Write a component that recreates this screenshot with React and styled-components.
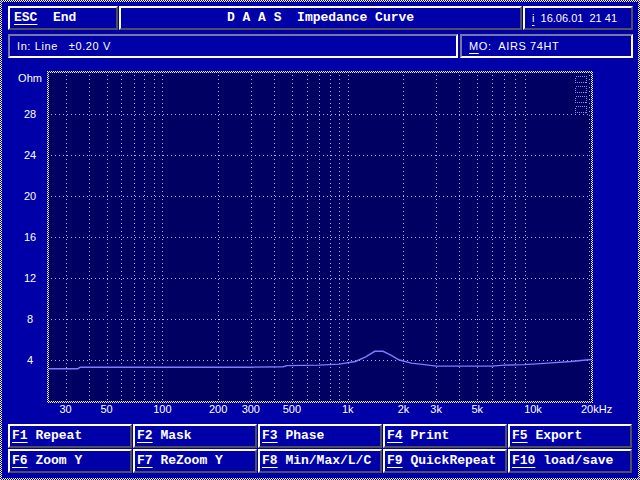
import React from "react";
import styled, { createGlobalStyle, css } from "styled-components";

const Global = createGlobalStyle`
  html, body { margin: 0; padding: 0; background: #0000a8; }
  body { font-family: "Liberation Sans", Arial, sans-serif; }
`;

const BLUE = "#0000a8";
const NAVY = "#000062";
const DOT = "#a8a8f8";

const Screen = styled.div`
  width: 640px;
  height: 480px;
  box-sizing: border-box;
  padding: 2px;
  background: repeating-conic-gradient(#ffffff 0 25%, ${BLUE} 0 50%) 0 0 / 2px 2px;
`;

const Inner = styled.div`
  height: 100%;
  box-sizing: border-box;
  background: ${BLUE};
  padding: 4px 5px 5px 6px;
  display: flex;
  flex-direction: column;
  gap: 4px;
  color: #ffffff;
`;

const TopRow = styled.div`
  display: grid;
  grid-template-columns: 110px 1fr 110px;
  column-gap: 1px;
  height: 24px;
`;

const InfoRow = styled.div`
  display: grid;
  grid-template-columns: 450px 1fr;
  column-gap: 2px;
  height: 24px;
`;

const Panel = styled.div`
  box-sizing: border-box;
  display: block;
  line-height: 20px;
  white-space: pre;
  overflow: hidden;
  background: ${BLUE};
  text-align: ${(p) => (p.$center ? "center" : "left")};
  padding-left: ${(p) => (p.$center ? 0 : p.$pad ?? 4)}px;
  ${(p) =>
    p.$sunken
      ? css`
          border-top: 2px solid #7878a0;
          border-left: 2px solid #7878a0;
          border-bottom: 2px solid #ffffff;
          border-right: 2px solid #ffffff;
          font-family: "Liberation Sans", Arial, sans-serif;
          font-size: 11px;
          letter-spacing: 0.6px;
        `
      : css`
          border-top: 2px solid #ffffff;
          border-left: 2px solid #ffffff;
          border-bottom: 2px solid #50505c;
          border-right: 2px solid #50505c;
          font-family: "Liberation Mono", "DejaVu Sans Mono", monospace;
          font-weight: bold;
          font-size: 13px;
        `}
  ${(p) =>
    p.$light &&
    css`
      font-family: "Liberation Sans", Arial, sans-serif;
      font-weight: normal;
      font-size: 11px;
    `}
`;

const Key = styled.span`
  text-decoration: underline;
  text-underline-offset: 3px;
  text-decoration-thickness: 1px;
`;

const ChartBox = styled.div`
  height: 358px;
`;

const FKeys = styled.div`
  display: grid;
  grid-template-columns: repeat(5, 124px);
  grid-template-rows: 24px 24px;
  gap: 1px;
`;

const xOf = (f) => 162.4 + 185.3 * (Math.log10(f) - 2);
const yOf = (ohm) => 401 - ohm * 10.25;

const PLOT = { x: 49, y: 73, w: 542, h: 328 };

const curve = [
  [24.4, 3.15], [35, 3.15], [36, 3.3], [300, 3.3], [450, 3.35], [470, 3.45],
  [700, 3.5], [900, 3.6], [1100, 3.85], [1250, 4.3], [1400, 4.85], [1550, 4.85],
  [1700, 4.5], [1900, 4.0], [2200, 3.7], [2600, 3.55], [3000, 3.4], [6000, 3.4],
  [7000, 3.5], [9000, 3.55], [12000, 3.7], [16000, 3.85], [20600, 4.05],
];

const vGrid = [];
[10, 100, 1000].forEach((d) => {
  for (let m = 1; m <= 9; m++) {
    const f = d * m;
    if (f >= 30 && f <= 10000) vGrid.push(f);
  }
});
vGrid.push(20000);

const xLabels = [
  [30, "30"], [50, "50"], [100, "100"], [200, "200"], [300, "300"], [500, "500"],
  [1000, "1k"], [2000, "2k"], [3000, "3k"], [5000, "5k"], [10000, "10k"],
];

const Chart = () => (
  <svg width="624" height="358" viewBox="8 62 624 358" style={{ display: "block" }}>
    <defs>
      <pattern id="chk" width="2" height="2" patternUnits="userSpaceOnUse">
        <rect width="2" height="2" fill={BLUE} />
        <rect width="1" height="1" fill="#ffffff" />
        <rect x="1" y="1" width="1" height="1" fill="#ffffff" />
      </pattern>
    </defs>
    <rect x={PLOT.x - 2} y={PLOT.y - 2} width={PLOT.w + 4} height={PLOT.h + 4} fill="url(#chk)" />
    <rect x={PLOT.x} y={PLOT.y} width={PLOT.w} height={PLOT.h} fill={NAVY} />
    <g stroke={DOT} strokeWidth="1" strokeDasharray="1 3" shapeRendering="crispEdges">
      {vGrid.map((f) => {
        const x = Math.round(xOf(f)) + 0.5;
        return <line key={f} x1={x} y1={PLOT.y + 2} x2={x} y2={PLOT.y + PLOT.h} />;
      })}
      {[4, 8, 12, 16, 20, 24, 28].map((o) => {
        const y = Math.round(yOf(o)) + 0.5;
        return <line key={o} x1={PLOT.x + 2} y1={y} x2={PLOT.x + PLOT.w} y2={y} />;
      })}
    </g>
    <g fill="none" stroke="#8c8ce8" strokeWidth="1" strokeDasharray="1 1" shapeRendering="crispEdges">
      <rect x="575.5" y="76.5" width="11" height="6" />
      <rect x="575.5" y="86.5" width="11" height="6" />
      <rect x="575.5" y="96.5" width="11" height="6" />
      <rect x="575.5" y="106.5" width="11" height="6" />
    </g>
    <polyline
      points={curve.map(([f, o]) => `${xOf(f).toFixed(1)},${yOf(o).toFixed(1)}`).join(" ")}
      fill="none"
      stroke="#7c7cff"
      strokeWidth="1.4"
    />
    <g fill="#ffffff" fontFamily="Liberation Sans, Arial, sans-serif" fontSize="11" textAnchor="middle">
      <text x="30" y="82">Ohm</text>
      {[4, 8, 12, 16, 20, 24, 28].map((o) => (
        <text key={o} x="30" y={Math.round(yOf(o)) + 4}>{o}</text>
      ))}
      {xLabels.map(([f, t]) => (
        <text key={f} x={xOf(f)} y="413">{t}</text>
      ))}
      <text x="581" y="413" textAnchor="start">20kHz</text>
    </g>
  </svg>
);

const fkeys = [
  ["F1", "Repeat"], ["F2", "Mask"], ["F3", "Phase"], ["F4", "Print"], ["F5", "Export"],
  ["F6", "Zoom Y"], ["F7", "ReZoom Y"], ["F8", "Min/Max/L/C"], ["F9", "QuickRepeat"], ["F10", "load/save"],
];

export default function App() {
  return (
    <>
      <Global />
      <Screen>
        <Inner>
          <TopRow>
            <Panel $pad={4}>
              <Key>ESC</Key>{"  End"}
            </Panel>
            <Panel $center>D A A S  Impedance Curve</Panel>
            <Panel $pad={7} $light>
              <Key>i</Key>{"  16.06.01  21 41"}
            </Panel>
          </TopRow>
          <InfoRow>
            <Panel $sunken $pad={7}>In: Line   ±0.20 V</Panel>
            <Panel $sunken $pad={7}>
              <Key>M</Key>{"O:  AIRS 74HT"}
            </Panel>
          </InfoRow>
          <ChartBox>
            <Chart />
          </ChartBox>
          <FKeys>
            {fkeys.map(([k, label]) => (
              <Panel key={k} $pad={2}>
                <Key>{k}</Key>{" " + label}
              </Panel>
            ))}
          </FKeys>
        </Inner>
      </Screen>
    </>
  );
}
